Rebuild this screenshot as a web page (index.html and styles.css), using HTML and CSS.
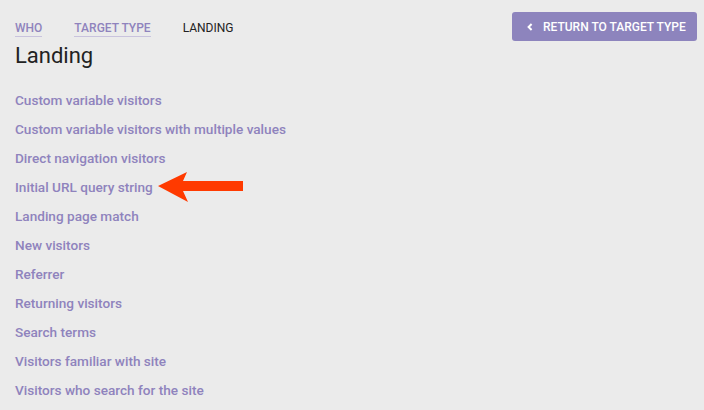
FILE: index.html
```html
<!DOCTYPE html>
<html lang="en">
<head>
<meta charset="utf-8">
<title>Landing</title>
<link rel="stylesheet" href="styles.css">
</head>
<body>
<div class="page">
  <header class="top">
    <nav class="crumbs">
      <a class="crumb" href="#">WHO</a>
      <a class="crumb" href="#">TARGET TYPE</a>
      <span class="crumb current">LANDING</span>
    </nav>
    <button class="back">
      <svg class="chev" width="6" height="8" viewBox="0 0 6 8"><path d="M4.6 1 L1.6 4 L4.6 7" fill="none" stroke="#fff" stroke-width="2"/></svg>
      <span>RETURN TO TARGET TYPE</span>
    </button>
  </header>
  <h1 class="title">Landing</h1>
  <ul class="list">
    <li><a href="#">Custom variable visitors</a></li>
    <li><a href="#">Custom variable visitors with multiple values</a></li>
    <li><a href="#">Direct navigation visitors</a></li>
    <li class="marked"><a href="#">Initial URL query string</a>
      <svg class="arrow" width="90" height="34" viewBox="0 0 90 34"><polygon points="0,15 29,1 25,10 85,10 85,20 25,20 30,31" fill="#ff3a00"/></svg>
    </li>
    <li><a href="#">Landing page match</a></li>
    <li><a href="#">New visitors</a></li>
    <li><a href="#">Referrer</a></li>
    <li><a href="#">Returning visitors</a></li>
    <li><a href="#">Search terms</a></li>
    <li><a href="#">Visitors familiar with site</a></li>
    <li><a href="#">Visitors who search for the site</a></li>
  </ul>
</div>
</body>
</html>
```
FILE: styles.css
```css
html, body {
  margin: 0;
  padding: 0;
  background: #ebebeb;
  font-family: Roboto, "Liberation Sans", sans-serif;
}
.page {
  padding: 12px 7px 0 15px;
  position: relative;
}
.top {
  display: flex;
  justify-content: space-between;
  align-items: center;
}
.crumbs {
  display: flex;
  gap: 32px;
  font-size: 12px;
  line-height: 16px;
}
.crumb {
  color: #8f83bd;
  font-weight: 500;
  text-decoration: none;
  border-bottom: 1px solid #c9c3dd;
  padding-top: 4px;
}
.crumb.current {
  color: #222;
  font-weight: 400;
  border-bottom-color: transparent;
}
.back {
  display: flex;
  align-items: center;
  gap: 10px;
  height: 29px;
  width: 185px;
  padding: 0 0 0 15px;
  border: none;
  border-radius: 3px;
  background: #8d84bd;
  color: #fff;
  font-family: Roboto, "Liberation Sans", sans-serif;
  font-size: 12px;
  font-weight: 500;
}
.chev { display: block; }
.title {
  margin: 2px 0 0;
  font-size: 22px;
  line-height: 26px;
  font-weight: 400;
  color: #222;
}
.list {
  list-style: none;
  margin: 17px 0 0;
  padding: 0;
}
.list li {
  font-size: 13.6px;
  line-height: 29px;
  font-weight: 500;
  position: relative;
}
.list a {
  color: #8f83bd;
  text-decoration: none;
}
.arrow {
  position: absolute;
  left: 143px;
  top: -2px;
}
```
